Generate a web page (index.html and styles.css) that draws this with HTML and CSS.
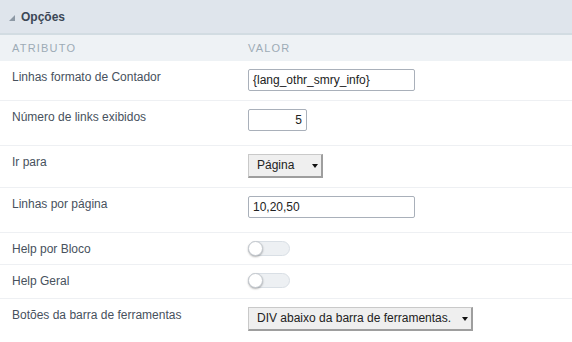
FILE: index.html
```
<!DOCTYPE html>
<html lang="pt">
<head>
    <meta charset="UTF-8">
    <title>Opções</title>
    <link rel="stylesheet" href="styles.css">
</head>
<body>
    <div class="panel">
        <div class="panel-title">
            <span class="caret"></span>
            <span>Opções</span>
        </div>
        <div class="head-row">
            <div class="col-attr">Atributo</div>
            <div class="col-val">Valor</div>
        </div>

        <div class="row row-1">
            <div class="col-attr">Linhas formato de Contador</div>
            <div class="col-val"><div class="input wide">{lang_othr_smry_info}</div></div>
        </div>
        <div class="row row-2">
            <div class="col-attr">Número de links exibidos</div>
            <div class="col-val"><div class="input small">5</div></div>
        </div>
        <div class="row row-3">
            <div class="col-attr">Ir para</div>
            <div class="col-val"><div class="select short">Página<span class="arrow"></span></div></div>
        </div>
        <div class="row row-4">
            <div class="col-attr">Linhas por página</div>
            <div class="col-val"><div class="input wide">10,20,50</div></div>
        </div>
        <div class="row row-5">
            <div class="col-attr">Help por Bloco</div>
            <div class="col-val"><div class="toggle"><span class="knob"></span></div></div>
        </div>
        <div class="row row-6">
            <div class="col-attr">Help Geral</div>
            <div class="col-val"><div class="toggle"><span class="knob"></span></div></div>
        </div>
        <div class="row row-7">
            <div class="col-attr">Botões da barra de ferramentas</div>
            <div class="col-val"><div class="select long">DIV abaixo da barra de ferramentas.<span class="arrow"></span></div></div>
        </div>
    </div>
</body>
</html>
```

FILE: styles.css
```
body {
    margin: 0;
    background: #fff;
    font-family: "Liberation Sans", Arial, sans-serif;
    font-size: 12px;
    color: #47515d;
}
.panel-title {
    height: 33px;
    display: flex;
    align-items: center;
    gap: 6px;
    padding-left: 9px;
    background: #dfe5ec;
    border-bottom: 2px solid #d2dce2;
    font-weight: bold;
    color: #3b4756;
}
.caret {
    width: 0;
    height: 0;
    border-left: 6px solid transparent;
    border-bottom: 6px solid #8d99a5;
    margin-top: 2px;
}
.head-row {
    display: flex;
    align-items: center;
    height: 26px;
    background: #eef2f5;
    font-size: 11px;
    letter-spacing: 1.2px;
    text-transform: uppercase;
    color: #9dabb6;
}
.col-attr {
    box-sizing: border-box;
    width: 248px;
    padding-left: 12px;
    flex-shrink: 0;
}
.row {
    display: flex;
    box-sizing: border-box;
    padding-top: 8px;
    border-bottom: 1px solid #eef0f3;
}
.row .col-attr {
    line-height: 14px;
    padding-top: 1px;
}
.row-1 { height: 40px; }
.row-2 { height: 45px; }
.row-3 { height: 42px; }
.row-4 { height: 45px; }
.row-5 { height: 32px; }
.row-6 { height: 34px; }
.row-7 { height: 42px; border-bottom: none; }

.input {
    box-sizing: border-box;
    height: 22px;
    line-height: 20px;
    padding: 0 4px;
    border: 1px solid #a9b0ba;
    border-radius: 2px;
    color: #222;
}
.input.wide { width: 167px; }
.input.small { width: 59px; text-align: right; }
.select {
    position: relative;
    box-sizing: border-box;
    height: 24px;
    line-height: 21px;
    padding-left: 8px;
    background: #efefef;
    border: 1px solid #c9c9c9;
    border-right: 2px solid #9e9e9e;
    border-bottom: 2px solid #9e9e9e;
    color: #222;
}
.select.short { width: 75px; }
.select.long { width: 225px; }
.arrow {
    position: absolute;
    right: 3px;
    top: 9px;
    width: 0;
    height: 0;
    border-left: 3px solid transparent;
    border-right: 3px solid transparent;
    border-top: 4px solid #111;
}
.toggle {
    position: relative;
    box-sizing: border-box;
    width: 42px;
    height: 15px;
    background: #edf0f3;
    border: 1px solid #d9dfe5;
    border-radius: 8px;
}
.knob {
    position: absolute;
    left: -1px;
    top: -1px;
    box-sizing: border-box;
    width: 15px;
    height: 15px;
    border-radius: 50%;
    background: #fff;
    border: 1px solid #c4c9cf;
    box-shadow: 0 1px 2px rgba(0, 0, 0, 0.3);
}
```
